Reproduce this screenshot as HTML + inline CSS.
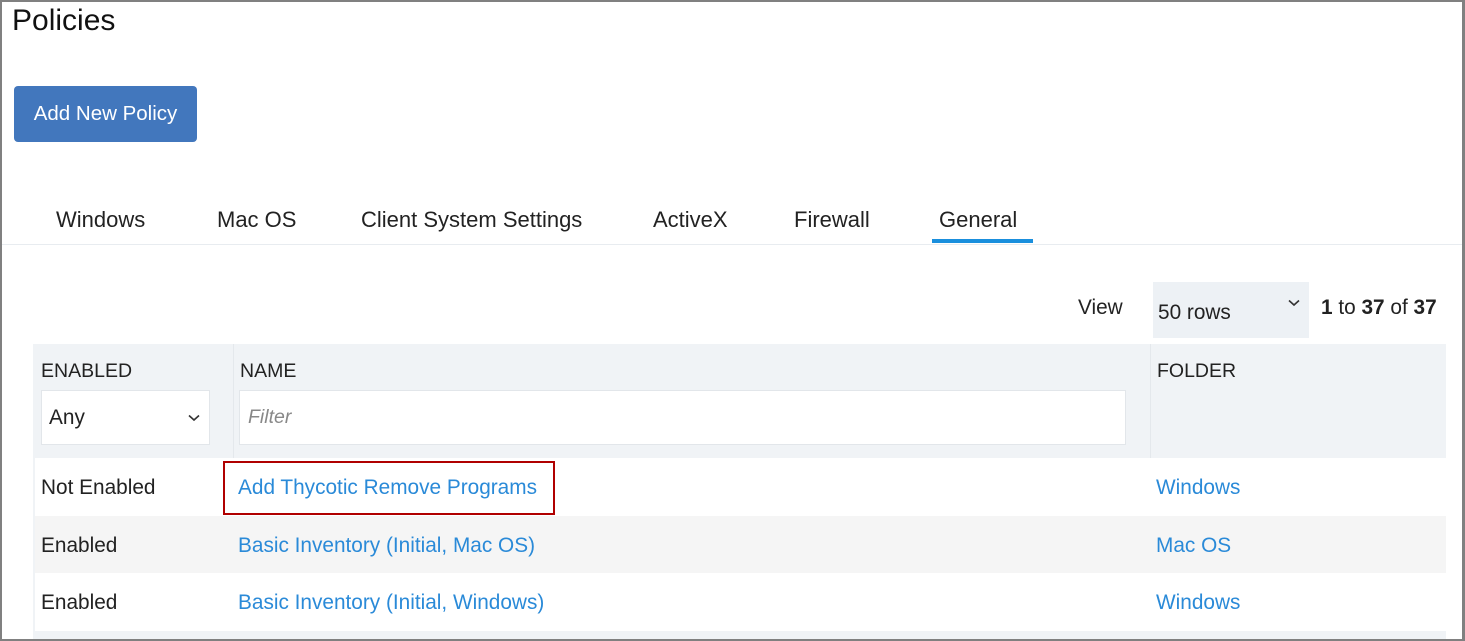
<!DOCTYPE html>
<html><head><style>
*{margin:0;padding:0;box-sizing:border-box}
body{width:1465px;height:641px;overflow:hidden;background:#fff;font-family:"Liberation Sans",sans-serif;color:#222;position:relative}
.frame{position:absolute;left:0;top:0;width:1465px;height:641px;border:2px solid #808080;border-right-width:3px}
.a{position:absolute;white-space:nowrap}
.lnk{color:#2a8ad8}
.t{font-size:22px;top:207px}
.r{font-size:20.8px}
</style></head><body>
<div class="a" style="left:12px;top:4px;font-size:30px;color:#111">Policies</div>
<div class="a" style="left:14px;top:86px;width:183px;height:56px;background:#4277bd;border-radius:4px;color:#fff;font-size:20.5px;line-height:56px;text-align:center">Add New Policy</div>
<div class="a t" style="left:56px">Windows</div>
<div class="a t" style="left:217px">Mac OS</div>
<div class="a t" style="left:361px">Client System Settings</div>
<div class="a t" style="left:653px">ActiveX</div>
<div class="a t" style="left:794px">Firewall</div>
<div class="a t" style="left:939px">General</div>
<div class="a" style="left:932px;top:239px;width:101px;height:4px;background:#1a8fdd"></div>
<div class="a" style="left:2px;top:244px;width:1460px;height:1px;background:#e8ecf0"></div>
<div class="a r" style="left:1078px;top:296px">View</div>
<div class="a" style="left:1153px;top:282px;width:156px;height:56px;background:#edf1f5"></div>
<div class="a r" style="left:1158px;top:301px">50 rows</div>
<svg class="a" style="left:1288px;top:299px" width="12" height="8"><path d="M1 1.5 L6 6 L11 1.5" stroke="#333" stroke-width="1.6" fill="none"/></svg>
<div class="a r" style="left:1321px;top:296px"><b>1</b> to <b>37</b> of <b>37</b></div>
<div class="a" style="left:33px;top:344px;width:1413px;height:297px;background:#f0f3f6"></div>
<div class="a" style="left:233px;top:344px;width:1px;height:114px;background:#e4e8ec"></div>
<div class="a" style="left:1150px;top:344px;width:1px;height:114px;background:#e4e8ec"></div>
<div class="a" style="left:41px;top:360px;font-size:19.5px">ENABLED</div>
<div class="a" style="left:240px;top:360px;font-size:19.5px">NAME</div>
<div class="a" style="left:1157px;top:360px;font-size:19.5px">FOLDER</div>
<div class="a" style="left:41px;top:390px;width:169px;height:55px;background:#fff;border:1px solid #e2e6ea"></div>
<div class="a r" style="left:49px;top:406px">Any</div>
<svg class="a" style="left:188px;top:414px" width="12" height="8"><path d="M1 1.5 L6 6 L11 1.5" stroke="#333" stroke-width="1.6" fill="none"/></svg>
<div class="a" style="left:239px;top:390px;width:887px;height:55px;background:#fff;border:1px solid #e2e6ea"></div>
<div class="a" style="left:248px;top:406px;font-size:19.5px;font-style:italic;color:#888">Filter</div>
<div class="a" style="left:35px;top:458px;width:1411px;height:58px;background:#fff"></div>
<div class="a" style="left:35px;top:516px;width:1411px;height:57px;background:#f5f5f5"></div>
<div class="a" style="left:35px;top:573px;width:1411px;height:58px;background:#fff"></div>
<div class="a r" style="left:41px;top:476px">Not Enabled</div>
<div class="a lnk r" style="left:238px;top:476px">Add Thycotic Remove Programs</div>
<div class="a lnk r" style="left:1156px;top:476px">Windows</div>
<div class="a" style="left:223px;top:461px;width:332px;height:54px;border:2px solid #b00000"></div>
<div class="a r" style="left:41px;top:534px">Enabled</div>
<div class="a lnk r" style="left:238px;top:534px">Basic Inventory (Initial, Mac OS)</div>
<div class="a lnk r" style="left:1156px;top:534px">Mac OS</div>
<div class="a r" style="left:41px;top:591px">Enabled</div>
<div class="a lnk r" style="left:238px;top:591px">Basic Inventory (Initial, Windows)</div>
<div class="a lnk r" style="left:1156px;top:591px">Windows</div>
<div class="frame"></div>
</body></html>
